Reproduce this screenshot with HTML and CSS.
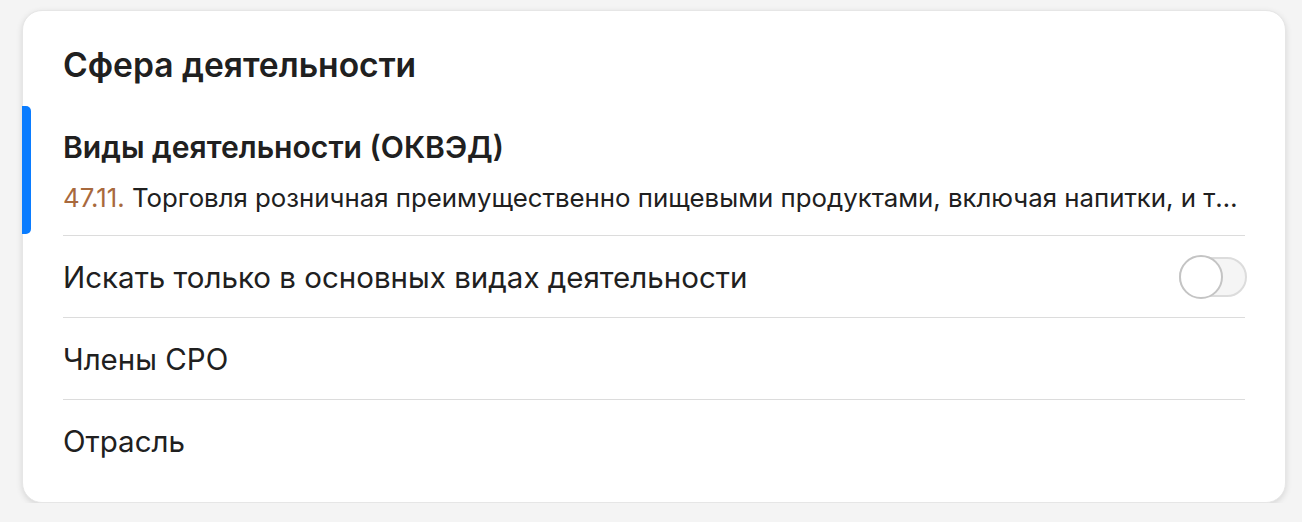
FILE: index.html
```html
<!DOCTYPE html>
<html lang="ru">
<head>
<meta charset="utf-8">
<title>Сфера деятельности</title>
<link rel="stylesheet" href="styles.css">
</head>
<body>
<div class="page">
  <section class="card">
    <h2 class="card-title">Сфера деятельности</h2>
    <div class="section section-active">
      <span class="accent-bar"></span>
      <div class="section-title">Виды деятельности (ОКВЭД)</div>
      <div class="section-value"><span class="code">47.11.</span> Торговля розничная преимущественно пищевыми продуктами, включая напитки, и табачными изделиями в неспециализированных магазинах</div>
    </div>
    <div class="row">
      <span class="row-label">Искать только в основных видах деятельности</span>
      <span class="toggle"><span class="toggle-knob"></span></span>
    </div>
    <div class="row">
      <span class="row-label">Члены СРО</span>
    </div>
    <div class="row row-last">
      <span class="row-label">Отрасль</span>
    </div>
  </section>
</div>
</body>
</html>
```
FILE: styles.css
```css
* { box-sizing: border-box; }
html, body { margin: 0; padding: 0; }
body {
  background: #f4f4f4;
  font-family: Inter, "Noto Sans", sans-serif;
  color: #202020;
}
.page {
  padding: 10px 16px 0 22px;
}
.card {
  position: relative;
  width: 1264px;
  height: 493px;
  background: #ffffff;
  border: 1px solid #e6e6e6;
  border-radius: 20px;
  box-shadow: 0 2px 6px rgba(0,0,0,0.12);
  padding: 0 40px 22px 40px;
  display: flex;
  flex-direction: column;
}
.card-title {
  margin: 0;
  padding: 34px 0 21px 0;
  font-size: 33.6px;
  line-height: 40px;
  font-weight: 600;
  letter-spacing: 0;
}
.section {
  border-bottom: 1px solid #dcdcdc;
  padding: 24px 0 0 0;
  height: 130px;
  flex: none;
}
.accent-bar {
  position: absolute;
  left: -1px;
  top: 95px;
  width: 9px;
  height: 128px;
  background: #0a7cff;
  border-radius: 0 5px 5px 0;
}
.section-title {
  font-size: 30.1px;
  line-height: 34px;
  font-weight: 600;
  letter-spacing: 0;
}
.section-value {
  margin-top: 19px;
  font-size: 25.8px;
  line-height: 30px;
  white-space: nowrap;
  overflow: hidden;
  text-overflow: ellipsis;
  padding-right: 6px;
}
.code { color: #a8693d; }
.row {
  height: 82px;
  flex: none;
  border-bottom: 1px solid #dcdcdc;
  display: flex;
  align-items: center;
  justify-content: space-between;
}
.row-last { border-bottom: none; }
.row-label {
  font-size: 29.5px;
  line-height: 34px;
}
.toggle {
  position: relative;
  flex: none;
  width: 68px;
  height: 40px;
  margin-right: -2px;
  border-radius: 20px;
  background: #f5f5f5;
  border: 2px solid #dcdcdc;
}
.toggle-knob {
  position: absolute;
  left: -2px;
  top: -4px;
  width: 44px;
  height: 44px;
  border-radius: 50%;
  background: #ffffff;
  border: 2px solid #c4c4c4;
}
```
